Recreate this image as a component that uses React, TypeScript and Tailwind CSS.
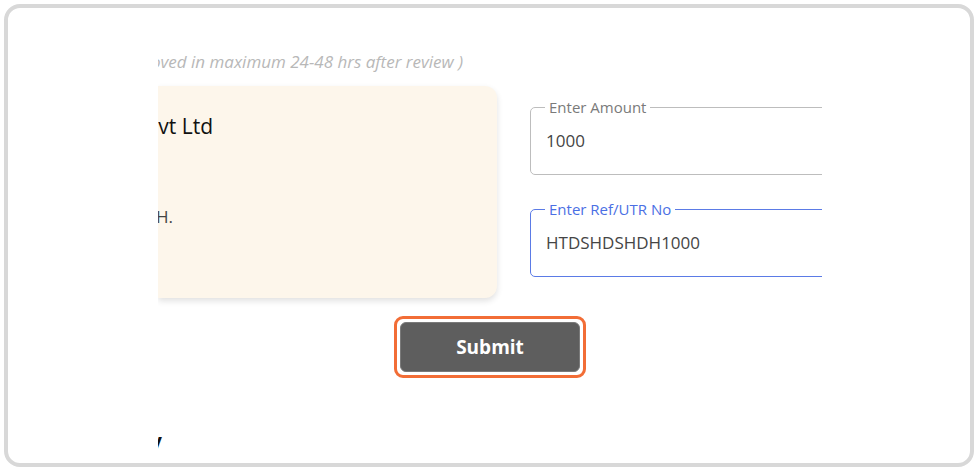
// App.tsx
const font = { fontFamily: '"Open Sans", "Noto Sans", sans-serif' };

function Field({
  label,
  value,
  active = false,
}: {
  label: string;
  value: string;
  active?: boolean;
}) {
  return (
    <fieldset
      className={`w-[420px] rounded-[5px] border-[1.3px] ${
        active ? "border-[#5b7be6]" : "border-[#bdbdbd]"
      }`}
    >
      <legend
        className={`ml-[14px] px-[4px] text-[15px] leading-[20px] ${
          active ? "text-[#4b6fe4]" : "text-[#7a7a7a]"
        }`}
      >
        {label}
      </legend>
      <div className="pl-[15px] pt-[12px] pb-[21px] text-[17px] leading-[24px] text-[#454545]">
        {value}
      </div>
    </fieldset>
  );
}

export default function App() {
  return (
    <div className="w-[976px] h-[471px] bg-white pt-[4px] pl-[4px]" style={font}>
      <div className="w-[970px] h-[463px] border-[4px] border-[#d8d8d8] rounded-[16px] flex">
        <div className="ml-[150px] w-[664px] h-full overflow-hidden flex flex-col">
          {/* note */}
          <div className="mt-[44px] w-[305px] flex justify-end whitespace-nowrap text-[17px] leading-[20px] italic text-[#b8b8b8]">
            <span>( Amount will be approved in maximum 24-48 hrs after review )</span>
          </div>

          <div className="mt-[14px] flex items-start shrink-0">
            {/* bank card */}
            <div className="w-[339px] h-[212px] shrink-0 bg-[#fdf6eb] rounded-r-[12px] shadow-[0_3px_6px_rgba(0,0,0,0.12)] flex flex-col">
              <div className="mt-[26px] w-[55px] flex justify-end whitespace-nowrap text-[21px] leading-[28px] text-[#111]">
                <span>ABC Technologies Pvt Ltd</span>
              </div>
              <div className="mt-[65px] w-[15px] flex justify-end whitespace-nowrap text-[17px] leading-[24px] text-[#444]">
                <span>IFSC: HDFC0001234, Branch: PUNJAB BRANCH.</span>
              </div>
            </div>

            {/* inputs */}
            <div className="ml-[33px] mt-[11px] flex flex-col gap-[24px] shrink-0">
              <Field label="Enter Amount" value="1000" />
              <Field label="Enter Ref/UTR No" value="HTDSHDSHDH1000" active />
            </div>
          </div>

          {/* submit */}
          <div className="mt-[18px] self-center border-[3px] border-[#f26d36] rounded-[9px] p-[3px]">
            <button className="w-[180px] h-[50px] bg-[#5e5e5e] rounded-[6px] border border-[#7a7a7a] text-white font-bold text-[19px]">
              Submit
            </button>
          </div>

          {/* next section title, clipped */}
          <div className="mt-[49px] w-[4px] flex justify-end whitespace-nowrap text-[20px] leading-[28px] font-bold text-[#111]">
            <span>Transaction History</span>
          </div>
        </div>
      </div>
    </div>
  );
}
